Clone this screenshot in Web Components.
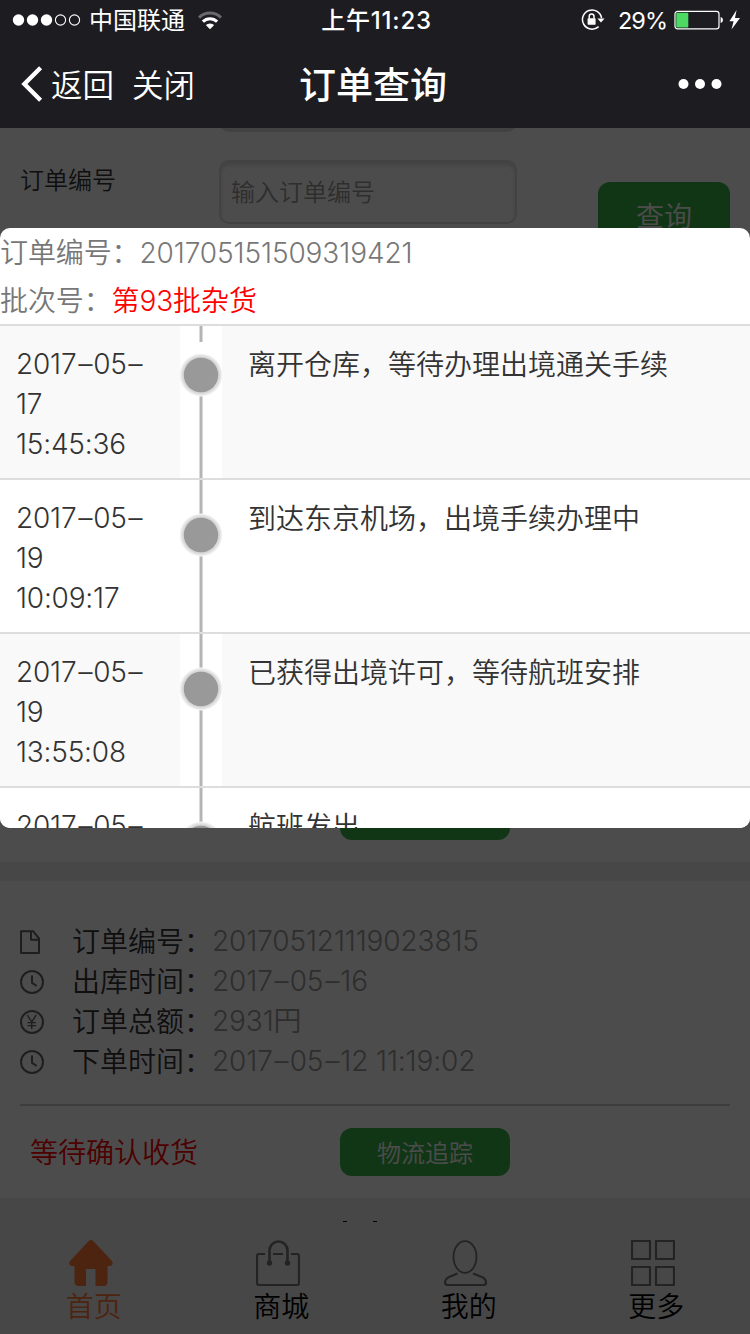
<!DOCTYPE html>
<html lang="zh-CN">
<head>
<meta charset="utf-8">
<title>订单查询</title>
<style>
    html, body { margin: 0; padding: 0; }
    body {
        width: 750px; height: 1334px; overflow: hidden; background: #fff;
        font-family: Inter, "Noto Sans CJK SC", sans-serif;
        font-size: 28px; font-weight: 350; color: #333;
    }
</style>
</head>
<body>
<order-app></order-app>

<script>
function define(name, html, setup) {
    const template = document.createElement('template');
    template.innerHTML = html;
    customElements.define(name, class extends HTMLElement {
        constructor() {
            super();
            this.attachShadow({mode: 'open'}).appendChild(template.content.cloneNode(true));
        }
        connectedCallback() {
            if (setup) setup(this, this.shadowRoot);
        }
    });
}

// hyphens in dates are drawn wide
const date = text => text.replace(/-/g, '<span class="dash">-</span>');

/* status bar */
define('status-bar', `
    <style>
        :host { display: flex; height: 40px; color: #fff; font-size: 24px; line-height: 42px; font-weight: 400; }
        svg { display: block; flex: none; }
        .left, .right { display: flex; align-items: center; height: 40px; }
        .left { padding-left: 12px; flex: 1; }
        .carrier { margin: 0 13px 0 8px; padding-top: 2px; }
        .time { font-weight: 500; letter-spacing: .8px; }
        .right { flex: 1; justify-content: flex-end; padding-right: 9px; }
        .pct { margin: 0 7px 0 13px; padding-top: 2px; font-size: 23.5px; letter-spacing: -1px; }
    </style>
    <div class="left">
        <svg width="69" height="14" viewBox="0 0 69 14" fill="#fff">
            <circle cx="6.5" cy="7" r="5.7"/><circle cx="20.5" cy="7" r="5.7"/><circle cx="34.5" cy="7" r="5.7"/>
            <g fill="none" stroke="#fff" stroke-width="1.1"><circle cx="48.5" cy="7" r="5.1"/><circle cx="62.5" cy="7" r="5.1"/></g>
        </svg>
        <span class="carrier">中国联通</span>
        <svg width="24" height="19" viewBox="0 0 24 19" fill="none" stroke="#fff" stroke-width="3">
            <path d="M1 6.6A15.5 15.5 0 0 1 23 6.6" stroke="#69696c"/>
            <path d="M4.9 10.6A10 10 0 0 1 19.1 10.6"/>
            <path d="M12 18.3L7.8 14.1A6 6 0 0 1 16.2 14.1Z" fill="#fff" stroke="none"/>
        </svg>
    </div>
    <span class="time">上午11:23</span>
    <div class="right">
        <svg width="24" height="22" viewBox="0 0 24 22">
            <path d="M20.6 9.2A9.6 9.6 0 1 0 17.6 17.6" fill="none" stroke="#fff" stroke-width="1.5"/>
            <path d="M16.4 9.4H23.6L20 13.4Z" fill="#fff"/>
            <rect x="6.6" y="9.3" width="8" height="6.4" rx=".6" fill="#fff"/>
            <path d="M8.2 9.6V7.4A2.4 2.5 0 0 1 13 7.4V9.6" fill="none" stroke="#fff" stroke-width="1.5"/>
        </svg>
        <span class="pct">29%</span>
        <svg width="67" height="22" viewBox="0 0 67 22">
            <rect x="1" y="2.3" width="44" height="17.6" rx="2.6" fill="none" stroke="#fff" stroke-width="1.2"/>
            <rect x="2.3" y="3.7" width="12" height="14.8" rx="1" fill="#4cd964"/>
            <path d="M46.6 8Q49 8.4 49 11Q49 13.6 46.6 14Z" fill="#fff"/>
            <path d="M62.6 1L55.4 12.2H59.6L57.5 20.5L66 8.9H61Z" fill="#fff"/>
        </svg>
    </div>
`);

/* title bar */
define('nav-bar', `
    <style>
        :host { display: grid; grid-template-columns: 1fr auto 1fr; height: 88px; align-items: center; color: #fff; font-size: 31.5px; font-weight: 350; }
        .left { display: flex; align-items: center; padding-left: 21px; }
        .left span { padding-bottom: 2px; }
        .back { margin: 0 18px 0 8px; }
        .title { font-size: 37px; font-weight: 500; padding: 0 4px 2px 0; }
        .more { justify-self: end; margin-right: 28px; }
        svg { display: block; }
    </style>
    <div class="left">
        <svg width="22" height="36" viewBox="0 0 22 36" fill="none" stroke="#fff" stroke-width="4.4"><path d="M19.6 1.8L3.4 18L19.6 34.2"/></svg>
        <span class="back"><slot name="back"></slot></span>
        <span><slot name="close"></slot></span>
    </div>
    <span class="title"><slot></slot></span>
    <svg class="more" width="44" height="10" viewBox="0 0 44 10" fill="#fff"><circle cx="5.5" cy="5" r="5"/><circle cx="22" cy="5" r="5"/><circle cx="38.5" cy="5" r="5"/></svg>
`);

define('green-button', `
    <style>
        :host { display: flex; box-sizing: border-box; align-items: center; justify-content: center; padding: 0 0 2px; background: #3ab549; color: #fff; border-radius: 12px; width: 170px; height: 48px; font-size: 24px; }
    </style>
    <slot></slot>
`);

/* search form, label + inputs + button */
define('query-form', `
    <style>
        :host { display: flex; height: 664px; padding-left: 20px; font-size: 24px; }
        label { width: 199px; padding-top: 33px; line-height: 40px; }
        .inputs { width: 298px; }
        .field { box-sizing: border-box; height: 64px; padding: 0 10px; border: 2px solid #dcdcdc; border-radius: 10px; line-height: 61px; color: #999; box-shadow: inset 0 3px 4px rgba(0,0,0,.14); }
        .field:first-child { margin: -60px 0 28px; background: linear-gradient(#eee, #ddd); }
        green-button { width: 132px; height: 68px; margin: 54px 0 0 81px; font-size: 28px; }
    </style>
    <label>订单编号</label>
    <div class="inputs">
        <div class="field"></div>
        <div class="field">输入订单编号</div>
    </div>
    <green-button>查询</green-button>
`);

/* icon + label + value */
const icons = {
    doc: '<path d="M1 1.2H13L19 8.5V23H1Z"/><path d="M11 1.2V9.8H19"/>',
    clock: '<circle cx="12" cy="12" r="11"/><path d="M12 5.5V12.8L16.8 16"/>',
    yen: '<circle cx="12" cy="12" r="11"/><path stroke-width="1.4" d="M7.3 5L11.7 12L16.2 5M11.7 12V19M7.5 12.6H16M7.5 15.6H16"/>'
};
define('info-line', `
    <style>
        :host { display: flex; height: 40px; line-height: 42px; }
        svg { width: 24px; height: 24px; margin: 10px 28px 0 0; fill: none; stroke: #666; stroke-width: 2; stroke-linejoin: round; }
        .label { padding-top: 1px; }
        .value { color: #999; letter-spacing: -.12px; }
    </style>
    <svg viewBox="0 0 24 24"></svg>
    <span class="label"><slot name="label"></slot></span>
    <span class="value"><slot></slot></span>
`, (el, root) => {
    root.querySelector('svg').innerHTML = icons[el.getAttribute('icon')];
});

define('order-footer', `
    <style>
        :host { display: flex; box-sizing: border-box; height: 92px; padding: 22px 0 0 10px; }
        .state { width: 310px; color: #f00; line-height: 51px; }
    </style>
    <span class="state"><slot></slot></span>
    <green-button>物流追踪</green-button>
`);

define('order-card', `
    <style>
        :host { display: block; padding: 39px 20px 0; background: #fff; color: #333; }
        .lines { padding-bottom: 24px; border-bottom: 2px solid #ccc; }
    </style>
    <div class="lines"><slot></slot></div>
    <slot name="footer"></slot>
`);

/* bottom tabs */
const tabIcons = {
    home: '<path fill="#ff7838" stroke="none" d="M19.5 1.2Q22 -1 24.5 1.2L42.5 20.5Q45.5 25.5 41 26H38.5V42.5Q38 46 35 46H26.5V29H17V46H9Q6 45.5 5.5 42.5V26H3Q-1.5 25.5 1.5 20.5Z"/>',
    shop: '<path d="M9 14H3Q1 14 1 16V43Q1 45 3 45H41Q43 45 43 43V16Q43 14 41 14H35M17 14H27"/><path stroke-width="2.6" d="M13.5 22V10.5A9 9 0 0 1 31.5 10.5V22"/><g fill="#777" stroke="none"><circle cx="13.5" cy="23" r="2.7"/><circle cx="31.5" cy="23" r="2.7"/></g>',
    mine: '<ellipse cx="21" cy="17" rx="11.5" ry="15.8" stroke-width="1.8"/><path d="M13.5 33.5L4.5 37.2Q1 39 1 42.5Q1 45 3.5 45H39.5Q42 45 42 42.5Q42 39 38.5 37.2L29 33.5"/>',
    more: '<rect x="1" y="1" width="18" height="18"/><rect x="25" y="1" width="18" height="18"/><rect x="1" y="27" width="18" height="18"/><rect x="25" y="27" width="18" height="18"/>'
};
define('tab-item', `
    <style>
        :host { display: flex; flex: 1; flex-direction: column; align-items: center; padding-top: 18px; color: #000; line-height: 43px; }
        :host([active]) { color: #ff7838; }
        svg { width: 44px; height: 46px; margin-right: 6px; fill: none; stroke: #777; stroke-width: 2.2; stroke-linejoin: round; }
    </style>
    <svg viewBox="0 0 44 46"></svg>
    <slot></slot>
`, (el, root) => {
    root.querySelector('svg').innerHTML = tabIcons[el.getAttribute('icon')];
});

/* one row of the tracking table; "first" moves the dot up and cuts the line */
define('track-row', `
    <style>
        :host { display: grid; grid-template-columns: 180px 42px 1fr; height: 152px; border-top: 2px solid #ddd; line-height: 40px; background: #fff; }
        :host([odd]) { background: #f9f9f9; }
        .time { padding: 17.5px 16px 0; letter-spacing: -.2px; }
        .text { padding: 19px 0 0 26px; }
        svg { display: block; background: #fff; }
    </style>
    <div class="time"><slot name="time"></slot></div>
    <svg width="42" height="152"></svg>
    <div class="text"><slot></slot></div>
`, (el, root) => {
    const first = el.hasAttribute('first');
    const y = first ? 49 : 55;
    root.querySelector('svg').innerHTML = `
        <radialGradient id="ring">
            <stop offset=".78" stop-color="#ccc"/>
            <stop offset=".9" stop-color="#e2e2e2"/>
            <stop offset="1" stop-color="#fafafa"/>
        </radialGradient>
        <path d="M21 0V${first ? 16 : y - 20}M21 ${y + 20}V152" stroke="#b4b4b4" stroke-width="3"/>
        <circle cx="21" cy="${y}" r="21.5" fill="url(#ring)"/>
        <circle cx="21" cy="${y}" r="17.2" fill="#999"/>`;
});

define('track-dialog', `
    <style>
        :host { display: block; height: 600px; overflow: hidden; border-radius: 10px; background: #fff; }
        .head { height: 48px; line-height: 50px; color: #777; letter-spacing: -.1px; }
        .batch { color: #f00; }
    </style>
    <div class="head">订单编号：<slot name="number"></slot></div>
    <div class="head">批次号：<span class="batch"><slot name="batch"></slot></span></div>
    <slot></slot>
`);

define('order-app', `
    <style>
        :host { display: flex; flex-direction: column; height: 1334px; }
        header { background: #1d1c21; }
        main { position: relative; flex: 1; overflow: hidden; background: #ededed; }
        .top { height: 734px; background: #fff; margin-bottom: 19px; }
        .last { margin-left: 340px; }
        .peek { display: flex; gap: 26px; height: 24px; align-items: flex-end; padding-left: 343px; }
        .peek i { width: 4px; height: 1px; background: #000; }
        .tabs { display: flex; height: 112px; background: #ededed; }
        .mask { position: absolute; inset: 0; background: rgba(0,0,0,.7); }
        .dash { display: inline-block; margin: 0 2.2px; transform: scaleX(1.65); }
        track-dialog { position: absolute; top: 100px; left: 0; right: 0; }
    </style>
    <header>
        <status-bar></status-bar>
        <nav-bar><span slot="back">返回</span><span slot="close">关闭</span>订单查询</nav-bar>
    </header>
    <main>
        <div class="top">
            <query-form></query-form>
            <green-button class="last"></green-button>
        </div>
        <order-card>
            <info-line icon="doc"><span slot="label">订单编号：</span>201705121119023815</info-line>
            <info-line icon="clock"><span slot="label">出库时间：</span>${date('2017-05-16')}</info-line>
            <info-line icon="yen"><span slot="label">订单总额：</span>2931円</info-line>
            <info-line icon="clock"><span slot="label">下单时间：</span>${date('2017-05-12 11:19:02')}</info-line>
            <order-footer slot="footer">等待确认收货</order-footer>
        </order-card>
        <div class="peek"><i></i><i></i></div>
        <div class="tabs">
            <tab-item icon="home" active>首页</tab-item>
            <tab-item icon="shop">商城</tab-item>
            <tab-item icon="mine">我的</tab-item>
            <tab-item icon="more">更多</tab-item>
        </div>
        <div class="mask"></div>
        <track-dialog>
            <span slot="number">201705151509319421</span>
            <span slot="batch">第93批杂货</span>
            <track-row odd first><span slot="time">${date('2017-05-')}<br>17<br>15:45:36</span>离开仓库，等待办理出境通关手续</track-row>
            <track-row><span slot="time">${date('2017-05-')}<br>19<br>10:09:17</span>到达东京机场，出境手续办理中</track-row>
            <track-row odd><span slot="time">${date('2017-05-')}<br>19<br>13:55:08</span>已获得出境许可，等待航班安排</track-row>
            <track-row><span slot="time">${date('2017-05-')}</span>航班发出</track-row>
        </track-dialog>
    </main>
`);
</script>
</body>
</html>
